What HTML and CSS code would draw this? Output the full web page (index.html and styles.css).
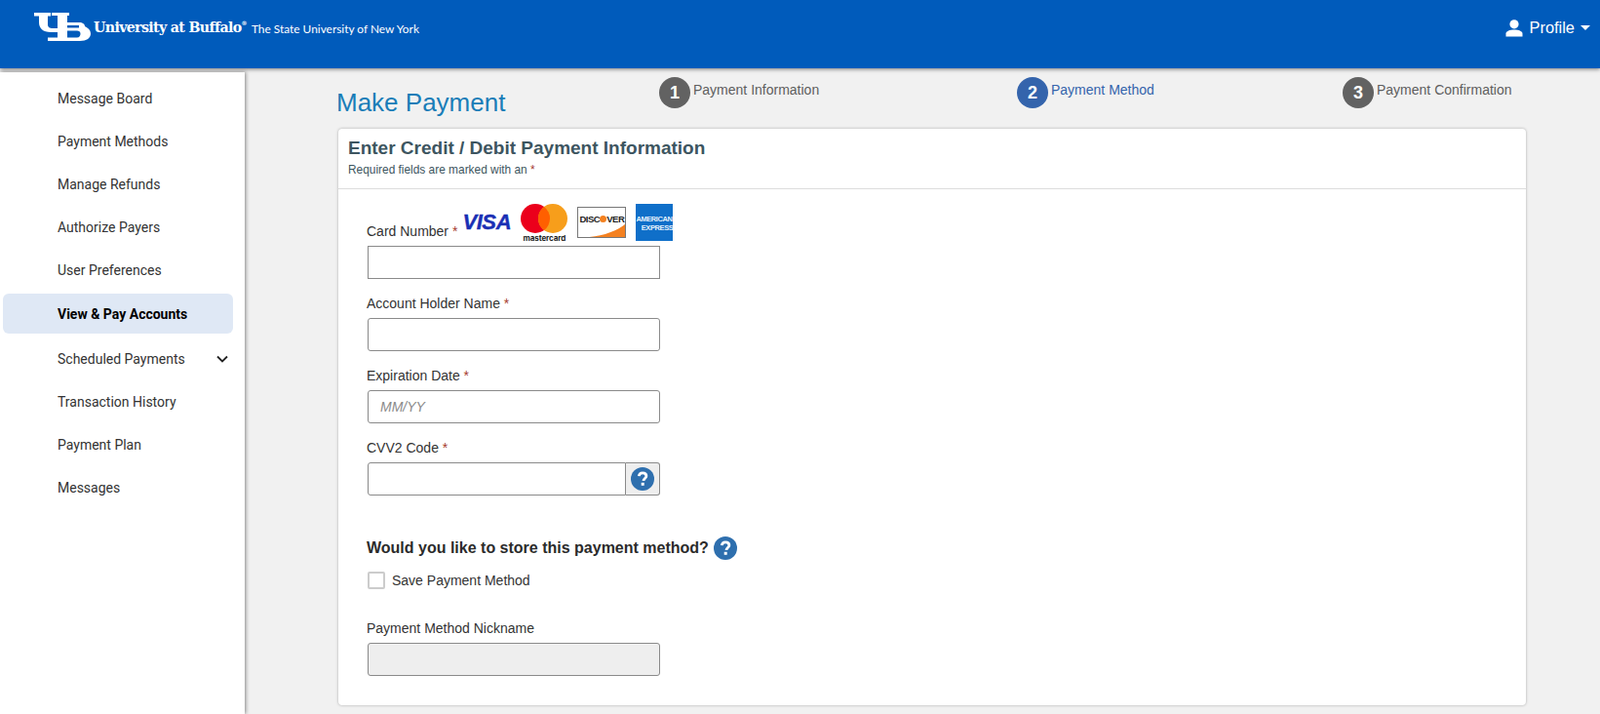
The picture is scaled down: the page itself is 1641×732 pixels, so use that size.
FILE: index.html
```html
<!DOCTYPE html>
<html lang="en">
<head>
    <meta charset="UTF-8">
    <meta name="viewport" content="width=device-width, initial-scale=1.0">
    <title>Make Payment</title>
    <link rel="stylesheet" href="styles.css">
</head>
<body>
    <!-- Top bar -->
    <div class="topbar">
        <div class="brand">
            <svg class="ub-mark" viewBox="0 0 59 29" width="59" height="29">
                <path fill="#fff" d="M0 0H17V3.500H14V12C14 15 16 16 19 16H24V20H17C9 20 5 16 5 10V3.500H0Z"/>
                <path fill="#fff" fill-rule="evenodd" d="M18 0H36V3H34V10H46C50 10 52 12 52 14C54 15 58 17 58 21.500C58 26 54 29 47 29H14V25.500H24V3H18ZM34 13V15.500H46V13ZM34 18.500V25.500H44C46.500 25.500 47.500 23.500 47.500 21.500C47.500 19.500 46 18.500 44 18.500Z"/>
            </svg>
            <span class="brand-name">University at Buffalo<sup>&reg;</sup></span>
            <span class="brand-sub">The State University of New York</span>
        </div>
        <div class="profile">
            <svg viewBox="0 0 18 18" width="18" height="18">
                <circle cx="9" cy="4.800" r="4.600" fill="#fff"/>
                <path fill="#fff" d="M0.500 17.500V14.500C0.500 12 4.500 10.500 9 10.500C13.500 10.500 17.500 12 17.500 14.500V17.500Z"/>
            </svg>
            <span>Profile</span>
            <span class="caret"></span>
        </div>
    </div>

    <div class="layout">
        <!-- Side menu -->
        <div class="sidebar">
            <a class="nav-item">Message Board</a>
            <a class="nav-item">Payment Methods</a>
            <a class="nav-item">Manage Refunds</a>
            <a class="nav-item">Authorize Payers</a>
            <a class="nav-item">User Preferences</a>
            <a class="nav-item active">View &amp; Pay Accounts</a>
            <a class="nav-item">Scheduled Payments
                <svg class="chevron" viewBox="0 0 12 8" width="12" height="8">
                    <path d="M1 1.500L6 6.500L11 1.500" fill="none" stroke="#222" stroke-width="1.800"/>
                </svg>
            </a>
            <a class="nav-item">Transaction History</a>
            <a class="nav-item">Payment Plan</a>
            <a class="nav-item">Messages</a>
        </div>

        <div class="main">
            <div class="title-row">
                <h1>Make Payment</h1>
                <div class="steps">
                    <div class="step step-one"><span class="step-num">1</span>Payment Information</div>
                    <div class="step step-two current"><span class="step-num">2</span>Payment Method</div>
                    <div class="step step-three"><span class="step-num">3</span>Payment Confirmation</div>
                </div>
            </div>

            <div class="card">
                <div class="card-header">
                    <h2>Enter Credit / Debit Payment Information</h2>
                    <p>Required fields are marked with an <span class="req">*</span></p>
                </div>
                <div class="card-body">
                    <div class="card-label-row">
                        <label>Card Number <span class="req">*</span></label>
                        <div class="card-logos">
                            <span class="visa">VISA</span>
                            <div class="mastercard">
                                <svg viewBox="0 0 48 30" width="48" height="30">
                                    <circle cx="15" cy="15" r="15" fill="#eb001b"/>
                                    <circle cx="33" cy="15" r="15" fill="#f79e1b"/>
                                    <path d="M24 3A15 15 0 0 1 24 27A15 15 0 0 1 24 3Z" fill="#ff5f00"/>
                                </svg>
                                <span>mastercard</span>
                            </div>
                            <div class="discover">
                                <span>DISC<i></i>VER</span>
                                <svg viewBox="0 0 50 16" width="48" height="13" preserveAspectRatio="none">
                                    <path d="M50 0V16H12C28 14 42 8 50 0Z" fill="#f48120"/>
                                </svg>
                            </div>
                            <div class="amex">
                                <span>AMERICAN</span>
                                <span class="amex-two">EXPRESS</span>
                            </div>
                        </div>
                    </div>
                    <input class="field square" type="text">

                    <label class="field-label">Account Holder Name <span class="req">*</span></label>
                    <input class="field" type="text">

                    <label class="field-label">Expiration Date <span class="req">*</span></label>
                    <input class="field" type="text" placeholder="MM/YY">

                    <label class="field-label">CVV2 Code <span class="req">*</span></label>
                    <div class="input-group">
                        <input class="field" type="text">
                        <span class="addon">
                            <svg class="help" viewBox="0 0 24 24" width="24" height="24">
                                <circle cx="12" cy="12" r="12" fill="#2e6fae"/>
                                <path d="M8.300 9.200C8.500 6.900 10 5.800 12.100 5.800C14.300 5.800 15.900 7.100 15.900 9C15.900 11.500 13 11.600 13 14" fill="none" stroke="#fff" stroke-width="2.800"/>
                                <rect x="10.700" y="15.800" width="3" height="3" fill="#fff"/>
                            </svg>
                        </span>
                    </div>

                    <div class="store-row">
                        <h3>Would you like to store this payment method?</h3>
                        <svg class="help" viewBox="0 0 24 24" width="24" height="24">
                            <circle cx="12" cy="12" r="12" fill="#2e6fae"/>
                            <path d="M8.300 9.200C8.500 6.900 10 5.800 12.100 5.800C14.300 5.800 15.900 7.100 15.900 9C15.900 11.500 13 11.600 13 14" fill="none" stroke="#fff" stroke-width="2.800"/>
                            <rect x="10.700" y="15.800" width="3" height="3" fill="#fff"/>
                        </svg>
                    </div>
                    <div class="check-row">
                        <span class="checkbox"></span>
                        <span>Save Payment Method</span>
                    </div>

                    <label class="field-label nickname">Payment Method Nickname</label>
                    <input class="field disabled" type="text" disabled>
                </div>
            </div>
        </div>
    </div>
</body>
</html>
```

FILE: styles.css
```css
* {
    margin: 0;
    padding: 0;
    box-sizing: border-box;
}

html, body {
    height: 732px;
    overflow: hidden;
}

body {
    background-color: #f1f1f1;
    font-family: 'Liberation Sans', Arial, sans-serif;
    font-size: 14px;
    color: #333;
}

.topbar {
    height: 70px;
    background-color: #005bbb;
    box-shadow: 0 1px 4px rgba(0, 0, 0, 0.5);
    color: white;
    display: flex;
    justify-content: space-between;
    padding: 13px 10px 0 35px;
    position: relative;
    z-index: 2;
}

.brand {
    display: flex;
    align-items: flex-start;
    height: 29px;
}

.ub-mark {
    flex: none;
}

.brand-name {
    font-family: 'DejaVu Serif', serif;
    font-weight: bold;
    font-size: 14.200px;
    letter-spacing: -0.650px;
    margin: 7px 0 0 2px;
    white-space: nowrap;
}

.brand-name sup {
    font-size: 6px;
    vertical-align: top;
    line-height: 8px;
}

.brand-sub {
    font-family: 'Lato', sans-serif;
    font-size: 11.900px;
    margin: 9px 0 0 5px;
    white-space: nowrap;
}

.profile {
    display: flex;
    align-items: center;
    height: 31px;
    font-size: 16.400px;
    gap: 7px;
}

.caret {
    width: 0;
    height: 0;
    border-left: 5.500px solid transparent;
    border-right: 5.500px solid transparent;
    border-top: 5.500px solid white;
    margin-left: -1px;
}

.layout {
    display: flex;
    height: 662px;
}

.sidebar {
    width: 251px;
    flex: none;
    margin-top: 4px;
    background-color: white;
    box-shadow: 1px 0 4px rgba(0, 0, 0, 0.45);
    padding: 7px 12px 0 3px;
    font-family: 'Roboto', sans-serif;
    font-size: 14px;
}

.nav-item {
    display: flex;
    align-items: center;
    justify-content: space-between;
    height: 40px;
    margin-bottom: 4px;
    padding: 0 5px 0 56px;
    color: #333;
    border-radius: 6px;
}

.nav-item.active {
    background-color: #dfe8f5;
    color: black;
    font-weight: bold;
    height: 41px;
    margin-bottom: 6px;
}

.main {
    flex: 1;
    padding: 0 76px 0 96px;
}

.title-row {
    display: flex;
    height: 62px;
    position: relative;
}

h1 {
    font-size: 26px;
    font-weight: normal;
    color: #1a7db8;
    margin: 20px 0 0 -2px;
    width: 331px;
    flex: none;
}

.steps {
    display: flex;
    flex: 1;
    padding-top: 9px;
}

.step {
    display: flex;
    align-items: flex-start;
    height: 32px;
    line-height: 27px;
    font-size: 14px;
    color: #5e5e5e;
    gap: 3px;
    white-space: nowrap;
}

.step-one {
    width: 367px;
}

.step-two {
    width: 334px;
}

.step.current {
    color: #3464ac;
}

.step-num {
    width: 32px;
    height: 32px;
    border-radius: 50%;
    background-color: #626262;
    color: white;
    font-weight: bold;
    font-size: 18px;
    line-height: 32px;
    text-align: center;
}

.current .step-num {
    background-color: #3464ac;
}

.card {
    background-color: white;
    border-radius: 4px;
    box-shadow: 0 0 3px rgba(0, 0, 0, 0.3);
    height: 591px;
}

.card-header {
    height: 62px;
    border-bottom: 1px solid #ddd;
    padding: 9px 10px 0;
    color: #3d5560;
}

h2 {
    font-size: 19px;
    line-height: 22px;
}

.card-header p {
    font-size: 11.900px;
    line-height: 16px;
    margin-top: 3px;
}

.req {
    color: #a5382c;
}

.card-body {
    padding: 15px 30px;
}

.card-label-row {
    display: flex;
    align-items: flex-end;
    height: 40px;
    margin-bottom: 3px;
    margin-left: -1px;
}

label {
    display: block;
    font-size: 14px;
    line-height: 16px;
    color: #333;
}

.card-label-row label {
    padding-bottom: 4px;
}

.card-logos {
    display: flex;
    align-items: flex-start;
    gap: 10px;
    margin-left: 5px;
    height: 40px;
}

.visa {
    font-weight: bold;
    font-style: italic;
    font-size: 22px;
    line-height: 22px;
    letter-spacing: -0.400px;
    color: #1a2fb4;
    -webkit-text-stroke: 0.400px #1a2fb4;
    margin-top: 8px;
    width: 50px;
}

.mastercard {
    width: 48px;
    display: flex;
    flex-direction: column;
    align-items: center;
}

.mastercard span {
    font-family: 'Inter', sans-serif;
    font-size: 8px;
    font-weight: 700;
    line-height: 8px;
    color: #222;
    margin-top: 1px;
    letter-spacing: -0.100px;
}

.discover {
    width: 50px;
    height: 32px;
    margin: 3px 0 0 0;
    border: 1px solid #777;
    background-color: white;
    padding-top: 7px;
}

.discover span {
    display: block;
    font-size: 9.500px;
    font-weight: bold;
    line-height: 10px;
    letter-spacing: -0.500px;
    color: #222;
    text-align: center;
    white-space: nowrap;
}

.discover i {
    display: inline-block;
    width: 7px;
    height: 7px;
    border-radius: 50%;
    background-color: #f48120;
}

.discover svg {
    display: block;
}

.amex {
    width: 38px;
    height: 38px;
    background-color: #0f6fc9;
    color: #e4f1fc;
    font-size: 7.500px;
    font-weight: bold;
    line-height: 9px;
    letter-spacing: -0.400px;
    padding-top: 11px;
    white-space: nowrap;
}

.amex span {
    display: block;
}

.amex-two {
    text-align: right;
}

.field {
    display: block;
    width: 300px;
    height: 34px;
    border: 1px solid #8a8a8a;
    border-radius: 3px;
    background-color: white;
    padding: 0 12px;
    font-family: inherit;
    font-size: 14px;
}

.field.square {
    border-radius: 0;
}

.field::placeholder {
    color: #8a8a8a;
    font-style: italic;
    opacity: 1;
}

.field.disabled {
    background-color: #eee;
}

.field-label {
    margin: 17px 0 7px;
    margin-left: -1px;
}

.input-group {
    display: flex;
    width: 300px;
}

.input-group .field {
    width: 265px;
    border-radius: 3px 0 0 3px;
}

.addon {
    width: 35px;
    height: 34px;
    border: 1px solid #8a8a8a;
    border-left: none;
    border-radius: 0 3px 3px 0;
    background-color: #eee;
    display: flex;
    align-items: center;
    justify-content: center;
}

.store-row {
    display: flex;
    align-items: center;
    gap: 5px;
    margin-top: 42px;
    height: 24px;
    margin-left: -1px;
}

h3 {
    font-size: 16px;
    color: #2b2b2b;
}

.check-row {
    display: flex;
    align-items: center;
    gap: 7px;
    margin-top: 11px;
    height: 20px;
}

.checkbox {
    width: 18px;
    height: 18px;
    border: 2px solid #ccc;
    border-radius: 2px;
    background-color: white;
}

.nickname {
    margin: 31px 0 7px;
    margin-left: -1px;
}
```
